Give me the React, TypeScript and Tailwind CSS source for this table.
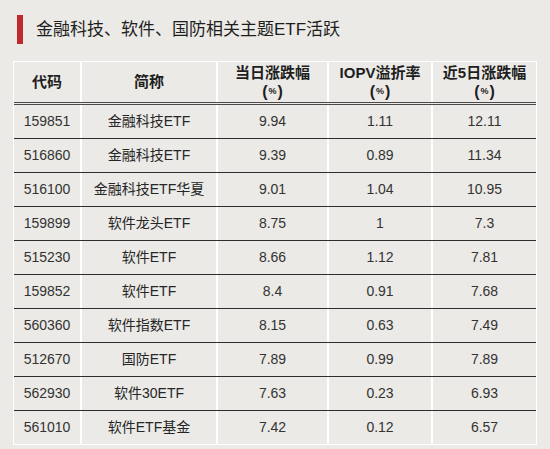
import React from 'react';

const rows = [
  ['159851', '金融科技ETF', '9.94', '1.11', '12.11'],
  ['516860', '金融科技ETF', '9.39', '0.89', '11.34'],
  ['516100', '金融科技ETF华夏', '9.01', '1.04', '10.95'],
  ['159899', '软件龙头ETF', '8.75', '1', '7.3'],
  ['515230', '软件ETF', '8.66', '1.12', '7.81'],
  ['159852', '软件ETF', '8.4', '0.91', '7.68'],
  ['560360', '软件指数ETF', '8.15', '0.63', '7.49'],
  ['512670', '国防ETF', '7.89', '0.99', '7.89'],
  ['562930', '软件30ETF', '7.63', '0.23', '6.93'],
  ['561010', '软件ETF基金', '7.42', '0.12', '6.57'],
];

const font = { fontFamily: '"Liberation Sans", "Noto Sans CJK SC", sans-serif' };

function HeadCell({ top, last }: { top: string; last?: boolean }) {
  return (
    <div className={'flex flex-col items-center justify-center ' + (last ? '' : 'border-r-2 border-white')}>
      <div className="h-[19px] leading-[19px]">{top}</div>
      <div className="h-[19px] leading-[19px] flex items-center">
        <span className="text-[16px]">(</span>
        <span className="text-[9px] px-[1px]">%</span>
        <span className="text-[16px]">)</span>
      </div>
    </div>
  );
}

export default function App() {
  return (
    <div className="w-[550px] h-[449px] bg-[#ebeae6] text-[#2a2a2a] overflow-hidden" style={font}>
      {/* 标题 */}
      <div className="flex items-center pt-[10px] pl-[17px] h-[39px] box-content">
        <div className="w-[6px] h-[29px] bg-[#c0282d]" />
        <div className="ml-[13px] text-[17px] leading-none text-[#1e1e1e]">
          金融科技、软件、国防相关主题ETF活跃
        </div>
      </div>

      {/* 表格 */}
      <div className="ml-[13px] mt-[12px] w-[524px] border border-white border-b-0">
        <div className="grid grid-cols-[68px_136px_111px_104px_103px] h-[43px] border-b-[3px] border-double border-[#4a4a4a] font-bold text-[15px] text-[#1e1e1e]">
          <div className="flex items-center justify-center border-r-2 border-white">代码</div>
          <div className="flex items-center justify-center border-r-2 border-white">简称</div>
          <HeadCell top="当日涨跌幅" />
          <HeadCell top="IOPV溢折率" />
          <HeadCell top="近5日涨跌幅" last />
        </div>
        {rows.map((r, i) => (
          <div
            key={r[0]}
            className={
              'grid grid-cols-[68px_136px_111px_104px_103px] h-[34px] text-[14px] text-[#333] ' +
              (i === rows.length - 1 ? 'border-b border-white' : 'border-b-[1.5px] border-[#2e2e2e]')
            }
          >
            <div className="flex items-center justify-center border-r-2 border-white">{r[0]}</div>
            <div className="flex items-center justify-center border-r-2 border-white text-[#262626]">{r[1]}</div>
            <div className="flex items-center justify-center border-r-2 border-white">{r[2]}</div>
            <div className="flex items-center justify-center border-r-2 border-white">{r[3]}</div>
            <div className="flex items-center justify-center">{r[4]}</div>
          </div>
        ))}
      </div>
    </div>
  );
}
